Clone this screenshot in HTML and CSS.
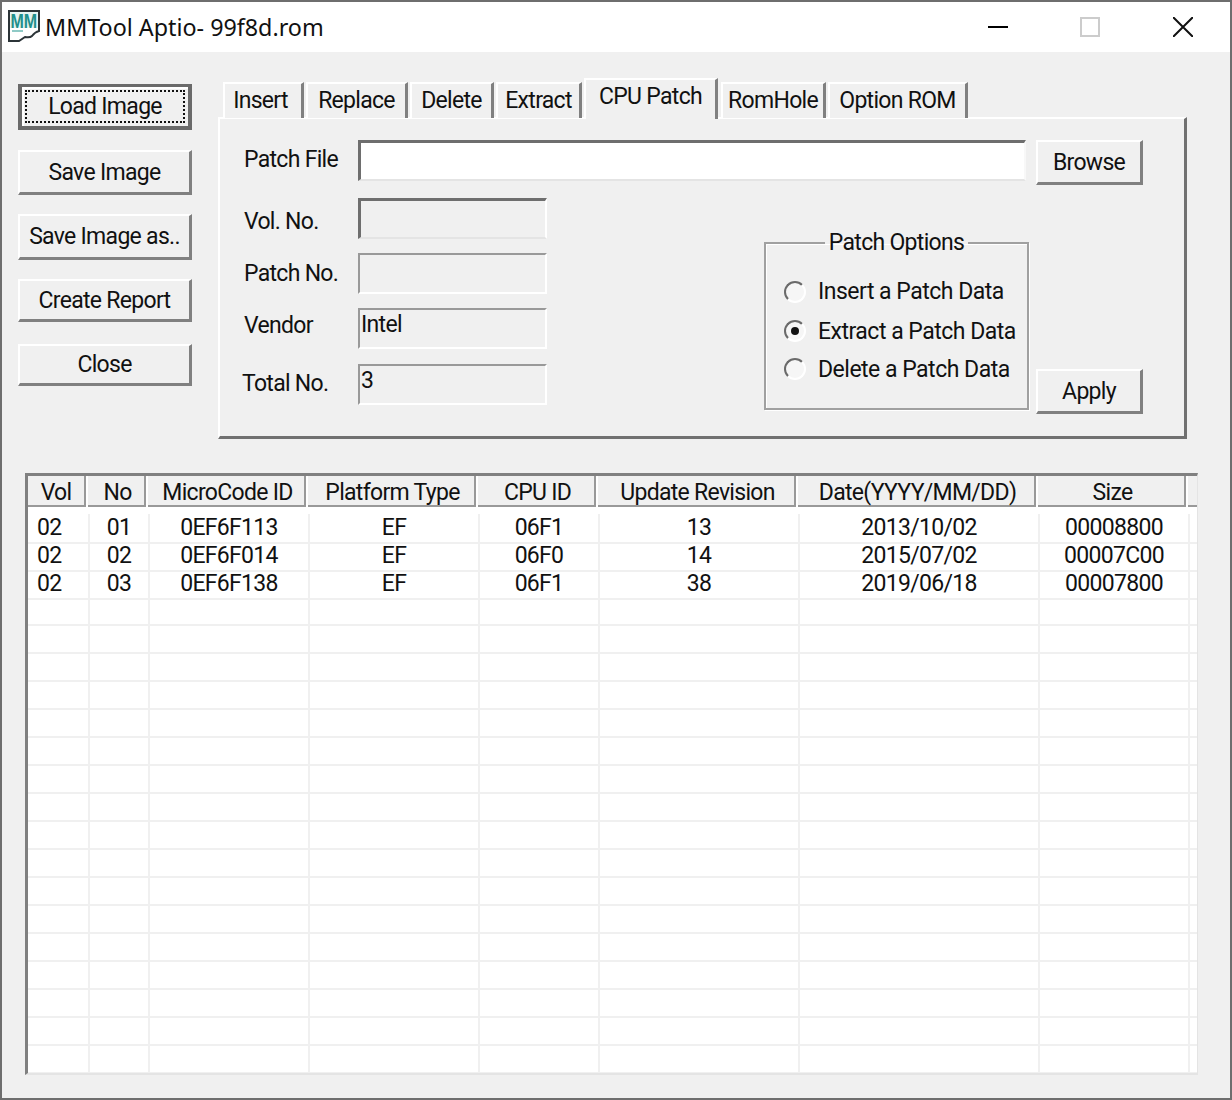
FILE: index.html
```html
<!DOCTYPE html>
<html lang="en">
<head>
<meta charset="utf-8">
<title>MMTool Aptio- 99f8d.rom</title>
<link rel="stylesheet" href="styles.css">
</head>
<body>
<div class="window">
  <header class="titlebar">
    <svg class="app-icon" viewBox="0 0 32 32" width="32" height="32" aria-hidden="true">
      <path d="M1 1H31V21Q27 22 24 26Q22 28 17 27L11 31H1Z" fill="#fff" stroke="#2c3438" stroke-width="2"/>
      <rect x="2" y="2" width="28" height="16" fill="#e6f4f2"/>
      <text transform="translate(2.5 18) scale(1 1.25)" class="icon-text">MM</text>
      <path d="M4 21H15" stroke="#8fcac6" stroke-width="2"/>
    </svg>
    <span class="title">MMTool Aptio- 99f8d.rom</span>
    <div class="caption">
      <svg class="cap cap-min" viewBox="0 0 20 20" width="20" height="20" aria-hidden="true"><path d="M0 10H20" stroke="#000" stroke-width="2"/></svg>
      <svg class="cap cap-max" viewBox="0 0 20 20" width="20" height="20" aria-hidden="true"><rect x="1" y="1" width="18" height="18" fill="none" stroke="#ccc" stroke-width="2"/></svg>
      <svg class="cap cap-close" viewBox="0 0 20 20" width="20" height="20" aria-hidden="true"><path d="M0 0L20 20M20 0L0 20" stroke="#111" stroke-width="2"/></svg>
    </div>
  </header>

  <main class="client">
    <div class="upper">
      <nav class="actions">
        <button class="btn btn-default"><span class="focus">Load Image</span></button>
        <button class="btn">Save Image</button>
        <button class="btn">Save Image as..</button>
        <button class="btn btn-report">Create Report</button>
        <button class="btn">Close</button>
      </nav>

      <section class="tabset">
        <div class="tabs">
          <div class="tab t-insert">Insert</div>
          <div class="tab t-replace">Replace</div>
          <div class="tab t-delete">Delete</div>
          <div class="tab t-extract">Extract</div>
          <div class="tab t-cpu active">CPU Patch</div>
          <div class="tab t-rom">RomHole</div>
          <div class="tab t-opt">Option ROM</div>
        </div>
        <div class="panel">
          <div class="file-row">
            <label class="lbl lbl-file">Patch File</label>
            <div class="field field-file"></div>
            <button class="btn btn-browse">Browse</button>
          </div>
          <div class="lower-row">
            <div class="fields">
              <label class="lbl lbl-vol">Vol. No.</label>
              <div class="field field-sunk"></div>
              <label class="lbl lbl-pat">Patch No.</label>
              <div class="field field-flat"></div>
              <label class="lbl lbl-ven">Vendor</label>
              <div class="field field-flat">Intel</div>
              <label class="lbl lbl-tot">Total No.</label>
              <div class="field field-flat">3</div>
            </div>
            <fieldset class="group">
              <legend>Patch Options</legend>
              <div class="radio r1"><span class="dot"></span>Insert a Patch Data</div>
              <div class="radio r2"><span class="dot on"></span>Extract a Patch Data</div>
              <div class="radio r3"><span class="dot"></span>Delete a Patch Data</div>
            </fieldset>
            <button class="btn btn-apply">Apply</button>
          </div>
        </div>
      </section>
    </div>

    <section class="list">
      <div class="list-head">
        <div class="hcell hfirst">Vol</div>
        <div class="hcell">No</div>
        <div class="hcell">MicroCode ID</div>
        <div class="hcell">Platform Type</div>
        <div class="hcell">CPU ID</div>
        <div class="hcell">Update Revision</div>
        <div class="hcell">Date(YYYY/MM/DD)</div>
        <div class="hcell">Size</div>
        <div class="hcell hfill"></div>
      </div>
      <div class="list-body">
        <div class="row"><span class="left">02</span><span>01</span><span>0EF6F113</span><span>EF</span><span>06F1</span><span>13</span><span>2013/10/02</span><span>00008800</span><span></span></div>
        <div class="row"><span class="left">02</span><span>02</span><span>0EF6F014</span><span>EF</span><span>06F0</span><span>14</span><span>2015/07/02</span><span>00007C00</span><span></span></div>
        <div class="row"><span class="left">02</span><span>03</span><span>0EF6F138</span><span>EF</span><span>06F1</span><span>38</span><span>2019/06/18</span><span>00007800</span><span></span></div>
        <div class="row"><span></span><span></span><span></span><span></span><span></span><span></span><span></span><span></span><span></span></div>
        <div class="row"><span></span><span></span><span></span><span></span><span></span><span></span><span></span><span></span><span></span></div>
        <div class="row"><span></span><span></span><span></span><span></span><span></span><span></span><span></span><span></span><span></span></div>
        <div class="row"><span></span><span></span><span></span><span></span><span></span><span></span><span></span><span></span><span></span></div>
        <div class="row"><span></span><span></span><span></span><span></span><span></span><span></span><span></span><span></span><span></span></div>
        <div class="row"><span></span><span></span><span></span><span></span><span></span><span></span><span></span><span></span><span></span></div>
        <div class="row"><span></span><span></span><span></span><span></span><span></span><span></span><span></span><span></span><span></span></div>
        <div class="row"><span></span><span></span><span></span><span></span><span></span><span></span><span></span><span></span><span></span></div>
        <div class="row"><span></span><span></span><span></span><span></span><span></span><span></span><span></span><span></span><span></span></div>
        <div class="row"><span></span><span></span><span></span><span></span><span></span><span></span><span></span><span></span><span></span></div>
        <div class="row"><span></span><span></span><span></span><span></span><span></span><span></span><span></span><span></span><span></span></div>
        <div class="row"><span></span><span></span><span></span><span></span><span></span><span></span><span></span><span></span><span></span></div>
        <div class="row"><span></span><span></span><span></span><span></span><span></span><span></span><span></span><span></span><span></span></div>
        <div class="row"><span></span><span></span><span></span><span></span><span></span><span></span><span></span><span></span><span></span></div>
        <div class="row"><span></span><span></span><span></span><span></span><span></span><span></span><span></span><span></span><span></span></div>
        <div class="row"><span></span><span></span><span></span><span></span><span></span><span></span><span></span><span></span><span></span></div>
        <div class="row"><span></span><span></span><span></span><span></span><span></span><span></span><span></span><span></span><span></span></div>
      </div>
    </section>
  </main>
</div>
</body>
</html>
```

FILE: styles.css
```css
* { box-sizing: border-box; }
html, body { margin: 0; padding: 0; background: #f0f0f0; }
body { width: 1232px; height: 1100px; overflow: hidden; font-family: Roboto, "Liberation Sans", Arial, sans-serif; font-size: 23px; letter-spacing: -0.7px; color: #111; }

.window { width: 1232px; height: 1100px; display: flex; flex-direction: column; border: 2px solid #6e6e6e; background: #f0f0f0; }

.titlebar { height: 50px; flex: none; background: #fff; display: flex; align-items: center; padding-left: 6px; }
.app-icon { flex: none; margin: -2px 5px 0 0; }
.icon-text { font-family: "Liberation Sans", sans-serif; font-weight: 700; font-size: 16px; fill: #1f8f8a; letter-spacing: 0; }
.title { font-family: "Noto Sans", "Open Sans", sans-serif; font-size: 23.3px; letter-spacing: 0; color: #111; }
.caption { margin-left: auto; display: flex; align-items: center; padding-right: 37px; }
.cap-min { margin-right: 72px; }
.cap-max { margin-right: 73px; }

.client { flex: 1; display: flex; flex-direction: column; padding: 32px 0 0 16px; }
.upper { display: flex; height: 355px; }

.actions { width: 174px; flex: none; display: grid; grid-template-rows: 47px 45px 46px 46px 42px; row-gap: 19px; align-content: start; }
.actions .btn-default { height: 46px; }
.actions .btn-report { height: 43px; }

.btn { font: inherit; letter-spacing: inherit; color: #111; background: #f0f0f0; padding: 0; margin: 0; width: 100%; height: 100%; border-style: solid; border-width: 2px 3px 3px 2px; border-color: #fff #808080 #808080 #fff; border-radius: 0; display: flex; align-items: center; justify-content: center; }
.btn-default { border: 4px solid #6a6a6a; border-top-width: 3px; box-shadow: inset 2px 2px 0 #fff; padding: 3px; }
.focus { width: 100%; height: 100%; border: 2px dotted #111; display: flex; align-items: center; justify-content: center; }

.tabset { width: 969px; margin: -6px 0 0 26px; display: flex; flex-direction: column; }
.tabs { display: flex; height: 40px; padding-left: 5px; align-items: flex-end; position: relative; z-index: 1; }
.tab { height: 36px; border-style: solid; border-color: #fff #808080 transparent #fff; border-width: 2px 3px 0 2px; display: flex; align-items: center; justify-content: center; padding-bottom: 2px; background: #f0f0f0; margin-right: 2px; }
.t-insert { width: 81px; padding-right: 5px; }
.t-replace { width: 102px; }
.t-delete { width: 84px; }
.t-extract { width: 86px; }
.t-cpu { width: 134px; height: 41px; margin-right: 3px; margin-bottom: -1px; padding-bottom: 6px; }
.t-rom { width: 105px; }
.t-opt { width: 140px; }

.panel { height: 322px; flex: none; border-style: solid; border-width: 2px 3px 3px 2px; border-color: #fff #707070 #707070 #fff; margin-top: -1px; padding: 21px 0 0 24px; }
.lbl { display: block; white-space: nowrap; }
.file-row { display: flex; align-items: flex-start; height: 58px; }
.lbl-file { width: 114px; line-height: 40px; }
.field { border-style: solid; border-width: 2px; border-color: #999 #fff #fff #999; padding-left: 1px; line-height: 30px; }
.field-file { width: 668px; height: 41px; background: #fff; border-color: #6e6e6e #f8f8f8 #e4e4e4 #6e6e6e; border-width: 3px 2px 2px 3px; }
.btn-browse { width: 107px; height: 45px; margin-left: 10px; }

.lower-row { display: flex; align-items: flex-start; }
.fields { width: 303px; flex: none; display: grid; grid-template-columns: 114px 189px; grid-template-rows: 41px 41px 42px 42px; row-gap: 14px; }
.fields .field { height: 41px; }
.field-sunk { border-color: #6e6e6e #fff #e4e4e4 #6e6e6e; border-width: 3px 2px 2px 3px; }
.lbl-vol { line-height: 47px; }
.lbl-pat { line-height: 41px; }
.lbl-ven { line-height: 35px; }
.lbl-tot { line-height: 39px; margin-left: -2px; }

.group { margin: 34px 0 0 217px; padding: 0; width: 265px; height: 178px; border: 2px solid #a0a0a0; border-radius: 0; box-shadow: 1px 1px 0 #fff, inset 1px 1px 0 #fff; flex: none; }
.group legend { margin: 0 auto; padding: 0 4px; line-height: 22px; height: 22px; }
.radio { display: flex; align-items: center; height: 38px; padding-left: 18px; white-space: nowrap; letter-spacing: -0.5px; }
.r1 { margin-top: 17px; height: 41px; }
.dot { width: 22px; height: 22px; border-radius: 50%; margin-right: 12px; background: #f6f6f6; border: 2px solid; border-color: #6a6a6a #fff #fff #6a6a6a; flex: none; position: relative; }
.dot.on::after { content: ""; position: absolute; left: 5px; top: 5px; width: 8px; height: 8px; border-radius: 50%; background: #111; }

.btn-apply { width: 107px; height: 45px; margin: 171px 0 0 7px; flex: none; }

.list { margin: 34px 0 0 7px; width: 1173px; height: 602px; overflow: hidden; border-style: solid; border-width: 3px 1px 2px 3px; border-color: #808080 #e4e4e4 #e4e4e4 #808080; display: flex; flex-direction: column; background: #fff; }
.list-head { display: grid; grid-template-columns: 60px 60px 160px 170px 120px 200px 240px 150px 9px; height: 38px; flex: none; }
.row { display: grid; grid-template-columns: 62px 60px 160px 170px 120px 200px 240px 150px 7px; height: 28px; }
.hcell { height: 31px; background: #f0f0f0; border-right: 2px solid #999; border-bottom: 2px solid #999; text-align: center; line-height: 31px; padding: 1px 0 0 3px; margin-right: 2px; white-space: nowrap; }
.hfirst { padding-left: 0; }
.hfill { margin-right: 0; border-right: none; }
.row span { border-right: 2px solid #f0f0f0; border-bottom: 2px solid #f0f0f0; text-align: center; line-height: 28px; white-space: nowrap; }
.row span:last-child { border-right: none; }
.row .left { text-align: left; padding-left: 9px; }
```
